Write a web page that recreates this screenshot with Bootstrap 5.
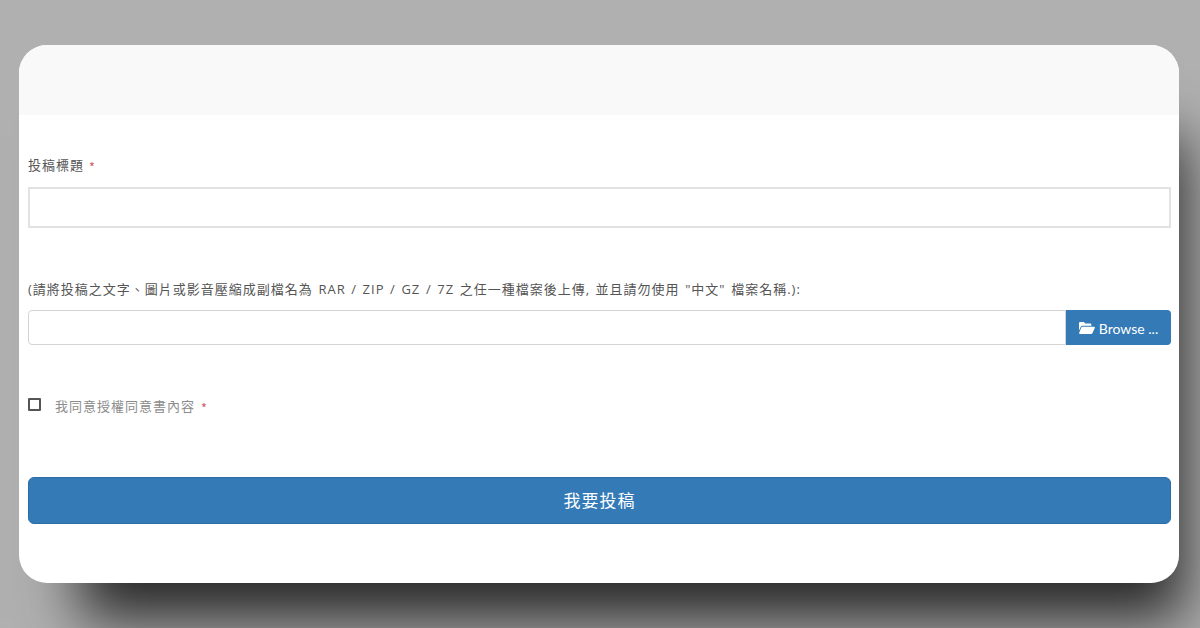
<!DOCTYPE html>
<html>

<head>
  <link href="https://cdn.jsdelivr.net/npm/bootstrap@5.3.2/dist/css/bootstrap.min.css" rel="stylesheet" type="text/css" />
  <script src="https://cdn.jsdelivr.net/npm/bootstrap@5.3.2/dist/js/bootstrap.bundle.min.js"></script>

  <style>
    html, body {
      height: 628px;
      overflow: hidden;
    }

    body {
      background-color: #b0b0b0;
      padding: 45px 21px 0 19px;
      font-family: "Open Sans", "Noto Sans CJK TC", sans-serif;
    }

    #sheet {
      height: 538px;
      background-color: #fff;
      border-radius: 28px;
      overflow: hidden;
    }

    #sheetWrap {
      border-radius: 28px;
      box-shadow: 33px 64px 55px -28px rgba(0, 0, 0, .78);
    }

    #sheetTop {
      height: 70px;
      background-color: #f9f9f9;
    }

    #sheetBody {
      padding: 42px 8px 0 9px;
    }

    .field-label {
      display: block;
      height: 20px;
      margin-bottom: 11px;
      font-size: 13px;
      line-height: 20px;
      letter-spacing: 1px;
      word-spacing: 1.2px;
      color: #555;
    }

    #titleLabel {
      margin-top: -2px;
      margin-bottom: 12px;
    }

    .req {
      color: #c8232b;
      font-size: 9px;
      vertical-align: 1px;
    }

    #title {
      height: 41px;
      border: 2px solid #e2e2e2;
      border-radius: 0;
      margin-bottom: 51px;
    }

    #fileName {
      height: 35px;
      border: 1px solid #d4d4d4;
      border-radius: 4px 0 0 4px;
    }

    #browse {
      width: 105px;
      height: 35px;
      padding: 1px 0 0;
      border: 0;
      border-radius: 0 4px 4px 0;
      background-color: #337ab7;
      color: #fff;
      font-family: Lato, sans-serif;
      font-size: 14px;
    }

    #agreeRow {
      margin-top: 53px;
      height: 18px;
    }

    #agree {
      width: 13px;
      height: 13px;
      margin: -5px 14px 0 0;
      border: 2px solid #555;
      border-radius: 1px;
    }

    #agreeRow label {
      font-size: 13px;
      letter-spacing: 1px;
      word-spacing: 2px;
      color: #8c8c8c;
    }

    #submit {
      height: 47px;
      margin-top: 61px;
      border: 1px solid #2e6da4;
      border-radius: 6px;
      background-color: #337ab7;
      color: #fff;
      font-size: 17px;
      letter-spacing: 1px;
    }
  </style>
</head>

<body>
  <div id="sheetWrap">
    <div id="sheet">
      <div id="sheetTop"></div>
      <form id="sheetBody">
        <label for="title" id="titleLabel" class="field-label">投稿標題 <span class="req">*</span></label>
        <input type="text" id="title" class="form-control" />

        <label for="fileName" class="field-label">(請將投稿之文字、圖片或影音壓縮成副檔名為 RAR / ZIP / GZ / 7Z 之任一種檔案後上傳, 並且請勿使用 "中文" 檔案名稱.):</label>
        <div class="d-flex">
          <input type="text" id="fileName" class="form-control flex-grow-1" />
          <button type="button" id="browse" class="btn flex-shrink-0 d-flex align-items-center justify-content-center gap-1">
            <svg width="16" height="12" viewBox="0 0 16 12" aria-hidden="true">
              <path fill="#fff" d="M0 1.2C0 .5.5 0 1.2 0h3.6l1.4 1.5h5c.7 0 1.2.5 1.2 1.2v1H3.4c-.7 0-1.2.3-1.6 1L0 8.4z" />
              <path fill="#fff" d="M3.3 4.7H15c.7 0 1.1.6.8 1.2l-2.4 5.3c-.2.5-.6.8-1.2.8H.9c-.6 0-1-.6-.7-1.2l2.1-5.3c.2-.5.6-.8 1-.8z" />
            </svg>
            <span>Browse ...</span>
          </button>
        </div>

        <div id="agreeRow" class="d-flex align-items-center">
          <input type="checkbox" id="agree" class="form-check-input flex-shrink-0" />
          <label for="agree">我同意授權同意書內容 <span class="req">*</span></label>
        </div>

        <button type="submit" id="submit" class="btn w-100 d-block">我要投稿</button>
      </form>
    </div>
  </div>
</body>

</html>
